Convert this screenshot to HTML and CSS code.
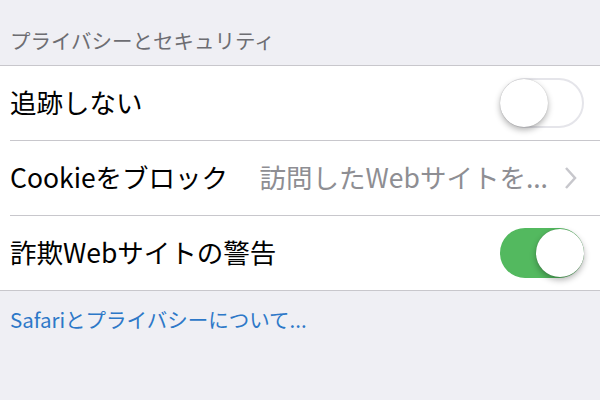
FILE: index.html
```html
<!DOCTYPE html>
<html lang="ja">
<head>
    <meta charset="UTF-8">
    <meta name="viewport" content="width=device-width, initial-scale=1.0">
    <title>プライバシーとセキュリティ</title>
    <link rel="stylesheet" href="styles.css">
</head>
<body>
    <div class="section-title">プライバシーとセキュリティ</div>

    <div class="group">
        <div class="row">
            <span class="label">追跡しない</span>
            <div class="switch"><div class="knob"></div></div>
        </div>
        <div class="row">
            <span class="label">Cookieをブロック</span>
            <span class="detail">訪問したWebサイトを...</span>
            <svg class="chevron" width="14" height="24" viewBox="0 0 14 24">
                <path d="M2 2 L11 12 L2 22" fill="none" stroke="#c7c7cc" stroke-width="2.5"/>
            </svg>
        </div>
        <div class="row">
            <span class="label">詐欺Webサイトの警告</span>
            <div class="switch on"><div class="knob"></div></div>
        </div>
    </div>

    <a class="footer-link" href="#">Safariとプライバシーについて...</a>
</body>
</html>
```

FILE: styles.css
```css
body {
    margin: 0;
    background-color: #efeff4;
    font-family: "Noto Sans CJK JP", "Liberation Sans", sans-serif;
    width: 600px;
    height: 400px;
    overflow: hidden;
}
.section-title {
    padding: 26px 10px 0 10px;
    height: 65px;
    box-sizing: border-box;
    font-size: 20.5px;
    line-height: 28px;
    color: #6d6d72;
}
.group {
    background-color: #fff;
    border-top: 1px solid #c8c7cc;
    border-bottom: 1px solid #c8c7cc;
}
.row {
    display: flex;
    align-items: center;
    height: 74px;
    margin-left: 10px;
    padding-right: 16px;
    border-bottom: 1px solid #c8c7cc;
}
.row:last-child {
    border-bottom: none;
}
.label {
    font-size: 26.5px;
    line-height: 36px;
    margin-top: -3px;
    color: #000;
    flex: 1;
    white-space: nowrap;
}
.detail {
    font-size: 26.5px;
    line-height: 36px;
    margin-top: -3px;
    color: #8e8e93;
    margin-right: 16px;
    white-space: nowrap;
}
.chevron {
    margin-right: 6px;
}
.switch {
    width: 84px;
    height: 50px;
    box-sizing: border-box;
    border-radius: 25px;
    border: 2px solid #e5e5ea;
    background-color: #fff;
    display: flex;
    align-items: center;
}
.knob {
    width: 48px;
    height: 48px;
    margin-left: -2px;
    border-radius: 50%;
    background-color: #fff;
    box-shadow: 0 3px 6px rgba(0, 0, 0, 0.3), 0 0 1px rgba(0, 0, 0, 0.25);
}
.switch.on {
    background-color: #53b95f;
    border-color: #53b95f;
    justify-content: flex-end;
}
.switch.on .knob {
    margin-left: 0;
    margin-right: -2px;
}
.footer-link {
    display: block;
    padding: 13px 10px;
    font-size: 20.5px;
    color: #2d78c8;
    text-decoration: none;
}
```
